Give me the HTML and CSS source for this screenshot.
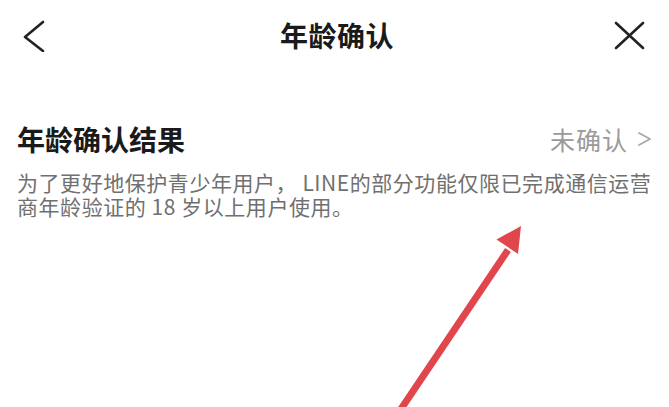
FILE: index.html
```html
<!DOCTYPE html>
<html lang="zh-CN">
<head>
<meta charset="utf-8">
<title>年龄确认</title>
<link rel="stylesheet" href="styles.css">
</head>
<body>
<div class="page">
  <header class="nav">
    <div class="nav-left">
      <svg class="icon-back" width="24" height="34" viewBox="0 0 24 34"><polyline points="21,4 3,19 21,33" fill="none" stroke="#222" stroke-width="2.6" stroke-linecap="round" stroke-linejoin="round"/></svg>
    </div>
    <h1 class="nav-title">年龄确认</h1>
    <div class="nav-right">
      <svg class="icon-close" width="32" height="34" viewBox="0 0 32 34"><path d="M3 5 L30 30 M30 5 L3 30" fill="none" stroke="#222" stroke-width="2.6" stroke-linecap="round"/></svg>
    </div>
  </header>
  <section class="section">
    <div class="row">
      <h2 class="row-title">年龄确认结果</h2>
      <div class="row-value">
        <span>未确认</span>
        <svg class="icon-more" width="16" height="16" viewBox="0 0 16 16"><polyline points="3,2 14,8 3,14" fill="none" stroke="#a8a8a8" stroke-width="1.8" stroke-linecap="round" stroke-linejoin="round"/></svg>
      </div>
    </div>
    <p class="desc">为了更好地保护青少年用户， LINE的部分功能仅限已完成通信运营商年龄验证的 18 岁以上用户使用。</p>
  </section>
  <svg class="arrow" width="669" height="407" viewBox="0 0 669 407">
    <line x1="399" y1="412" x2="508" y2="250" stroke="#e2464d" stroke-width="7" stroke-linecap="butt"/>
    <polygon points="521,226 496.5,239.5 518,254" fill="#e2464d"/>
  </svg>
</div>
</body>
</html>
```
FILE: styles.css
```css
* { box-sizing: border-box; }
html, body {
  margin: 0;
  padding: 0;
  background: #fff;
  font-family: "Noto Sans CJK SC", "Noto Sans", sans-serif;
}
.page {
  position: relative;
  width: 669px;
  height: 407px;
  overflow: hidden;
}
.nav {
  height: 70px;
  display: grid;
  grid-template-columns: 1fr auto 1fr;
  align-items: center;
  padding: 0 24px 0 22px;
}
.nav-left { display: flex; justify-content: flex-start; }
.nav-right { display: flex; justify-content: flex-end; }
.icon-back, .icon-close { display: block; }
.nav-title {
  margin: 0 0 0 7px;
  font-size: 28px;
  font-weight: 700;
  color: #1a1a1a;
  line-height: 36px;
  letter-spacing: 0.5px;
}
.section {
  padding: 51px 17px 0 17px;
}
.row {
  display: flex;
  justify-content: space-between;
  align-items: center;
  height: 36px;
}
.row-title {
  margin: 0;
  font-size: 28px;
  font-weight: 700;
  line-height: 36px;
  color: #1a1a1a;
}
.row-value {
  display: flex;
  align-items: center;
  gap: 8px;
  color: #9a9a9a;
  font-size: 25px;
  line-height: 36px;
  letter-spacing: 1px;
}
.icon-more { display: block; }
.desc {
  margin: 13px 0 0 0;
  font-size: 21px;
  line-height: 24px;
  color: #707070;
  letter-spacing: 0.55px;
}
.arrow {
  position: absolute;
  left: 0;
  top: 0;
  pointer-events: none;
}
```
